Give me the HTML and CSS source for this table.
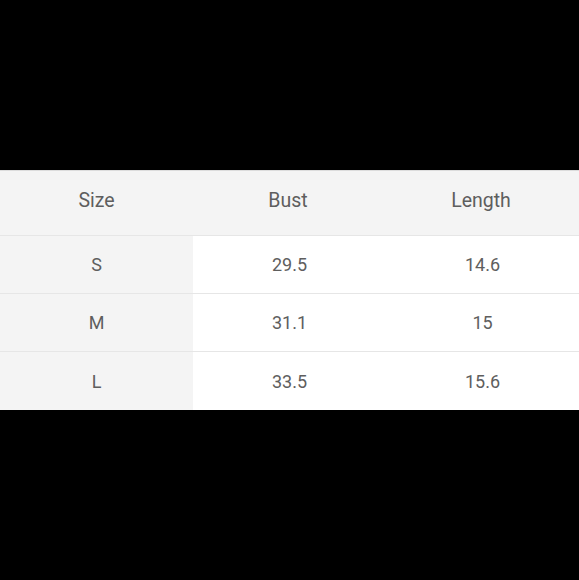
FILE: index.html
```html
<!DOCTYPE html>
<html>
<head>
<meta charset="utf-8">
<link rel="stylesheet" href="styles.css">
</head>
<body>
<div class="page">
  <div class="table">
    <div class="row head">
      <div class="cell first">Size</div>
      <div class="cell">Bust</div>
      <div class="cell">Length</div>
    </div>
    <div class="row">
      <div class="cell first">S</div>
      <div class="cell">29.5</div>
      <div class="cell">14.6</div>
    </div>
    <div class="row">
      <div class="cell first">M</div>
      <div class="cell">31.1</div>
      <div class="cell">15</div>
    </div>
    <div class="row last">
      <div class="cell first">L</div>
      <div class="cell">33.5</div>
      <div class="cell">15.6</div>
    </div>
  </div>
</div>
</body>
</html>
```
FILE: styles.css
```css
html, body {
  margin: 0;
  padding: 0;
  background: #000;
}
.page {
  width: 579px;
  height: 580px;
  padding-top: 170px;
  box-sizing: border-box;
}
.table {
  background: #fff;
  border-top: 1px solid #dcdcdc;
  font-family: Roboto, "Noto Sans", sans-serif;
  color: #5e5e5e;
}
.row {
  display: grid;
  grid-template-columns: 193px 193px 193px;
  height: 57px;
  border-bottom: 1px solid #e6e6e6;
  font-size: 18px;
}
.row.last {
  border-bottom: none;
  height: 58px;
}
.row.head {
  height: 64px;
  background: #f4f4f4;
  font-size: 19.5px;
}
.row.head .cell {
  padding-bottom: 5px;
}
.row.head .cell:not(.first) {
  padding-right: 3px;
}
.cell {
  display: flex;
  align-items: center;
  justify-content: center;
}
.cell.first {
  background: #f4f4f4;
}
```
